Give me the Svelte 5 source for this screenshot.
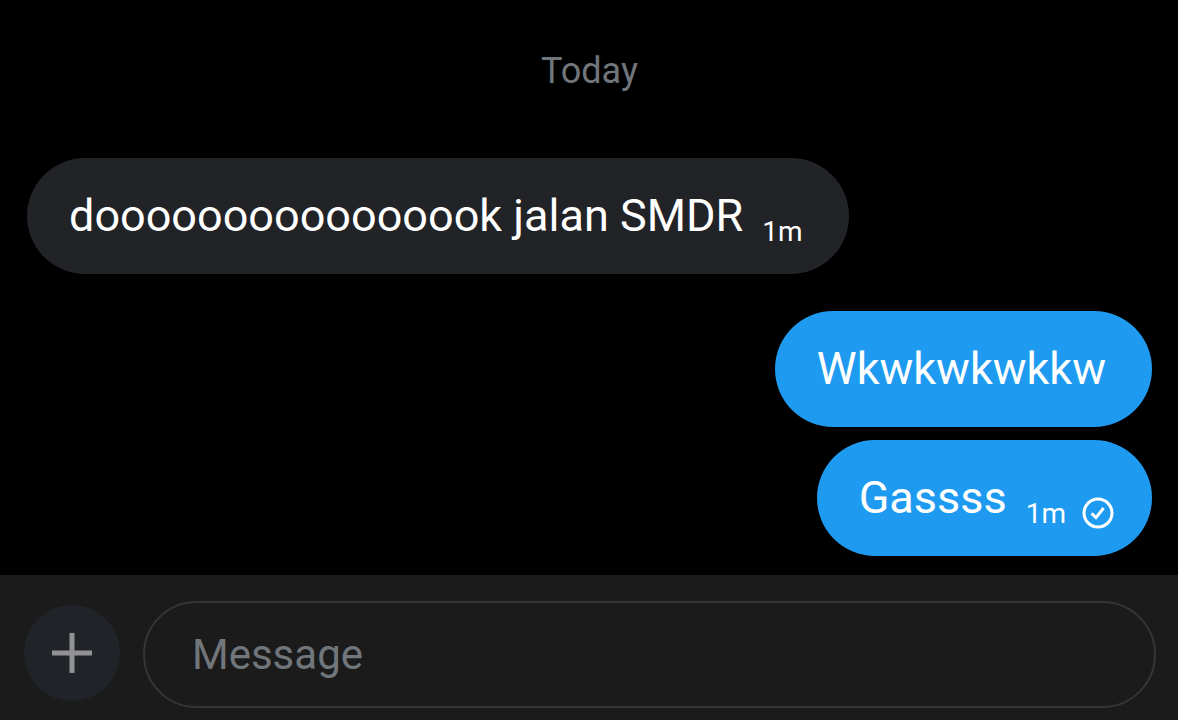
<script>
    const groups = [
        {
            mine: false,
            messages: [{ text: "doooooooooooooook jalan SMDR", time: "1m" }],
        },
        {
            mine: true,
            messages: [
                { text: "Wkwkwkwkkw" },
                { text: "Gassss", time: "1m", sent: true },
            ],
        },
    ];

    let draft = $state("");
</script>

<div class="chat">
    <main class="thread">
        <h2 class="day">Today</h2>
        {#each groups as group}
            <section class="group" class:mine={group.mine}>
                {#each group.messages as message}
                    <div class="bubble" class:sent={message.sent}>
                        <p>{message.text}</p>
                        {#if message.time}
                            <span class="time">{message.time}</span>
                        {/if}
                        {#if message.sent}
                            <svg class="check" viewBox="0 0 32 32" role="img" aria-label="Sent">
                                <circle cx="16" cy="16" r="14" />
                                <path d="M9.6 16.4l4.4 4.2 7.6-9.6" />
                            </svg>
                        {/if}
                    </div>
                {/each}
            </section>
        {/each}
    </main>

    <form class="composer" onsubmit={(e) => e.preventDefault()}>
        <button type="button" class="add" aria-label="Add attachment">
            <svg viewBox="0 0 42 42" aria-hidden="true">
                <path d="M21 1v40M1 21h40" />
            </svg>
        </button>
        <input type="text" aria-label="Message" placeholder="Message" bind:value={draft} />
    </form>
</div>

<style>
    :global(body) {
        margin: 0;
        background: #000;
    }

    .chat {
        display: flex;
        flex-direction: column;
        min-height: 100vh;
        font-family: Roboto, "Liberation Sans", sans-serif;
        color: #fff;
    }

    .thread {
        flex: 1;
        display: flex;
        flex-direction: column;
        gap: 37px;
        padding: 48px 26px 19px 27px;
    }

    .day {
        margin: 0 0 27px;
        text-align: center;
        font-size: 36px;
        font-weight: 400;
        line-height: 46px;
        color: #71767b;
    }

    .group {
        display: flex;
        flex-direction: column;
        align-items: flex-start;
        gap: 13px;
    }

    .group.mine {
        align-items: flex-end;
    }

    .bubble {
        display: flex;
        align-items: flex-end;
        padding: 28px 46px 28px 42px;
        border-radius: 58px;
        background: #212327;
    }

    .mine .bubble {
        background: #1e9bf1;
    }

    .bubble.sent {
        padding-right: 38px;
    }

    .bubble p {
        margin: 0;
        font-size: 45px;
        line-height: 60px;
    }

    .time {
        margin-left: 19px;
        font-size: 28px;
        line-height: 28px;
    }

    .check {
        width: 32px;
        height: 32px;
        margin: 0 0 -1px 16px;
        fill: none;
        stroke: #fff;
        stroke-width: 3;
    }

    .composer {
        display: flex;
        align-items: center;
        gap: 23px;
        padding: 26px 22px 12px 24px;
        background: #1b1b1b;
    }

    .add {
        flex: none;
        display: grid;
        place-items: center;
        width: 96px;
        height: 96px;
        margin-bottom: 3px;
        padding: 0;
        border: 0;
        border-radius: 50%;
        background: #202327;
    }

    .add svg {
        width: 42px;
        height: 42px;
        stroke: #929196;
        stroke-width: 5;
    }

    input {
        flex: 1;
        min-width: 0;
        box-sizing: border-box;
        height: 107px;
        padding: 0 47px;
        border: 2px solid #333538;
        border-radius: 54px;
        outline: none;
        background: transparent;
        font: inherit;
        font-size: 42px;
        color: #fff;
    }

    input::placeholder {
        color: #71767b;
        opacity: 1;
    }
</style>
